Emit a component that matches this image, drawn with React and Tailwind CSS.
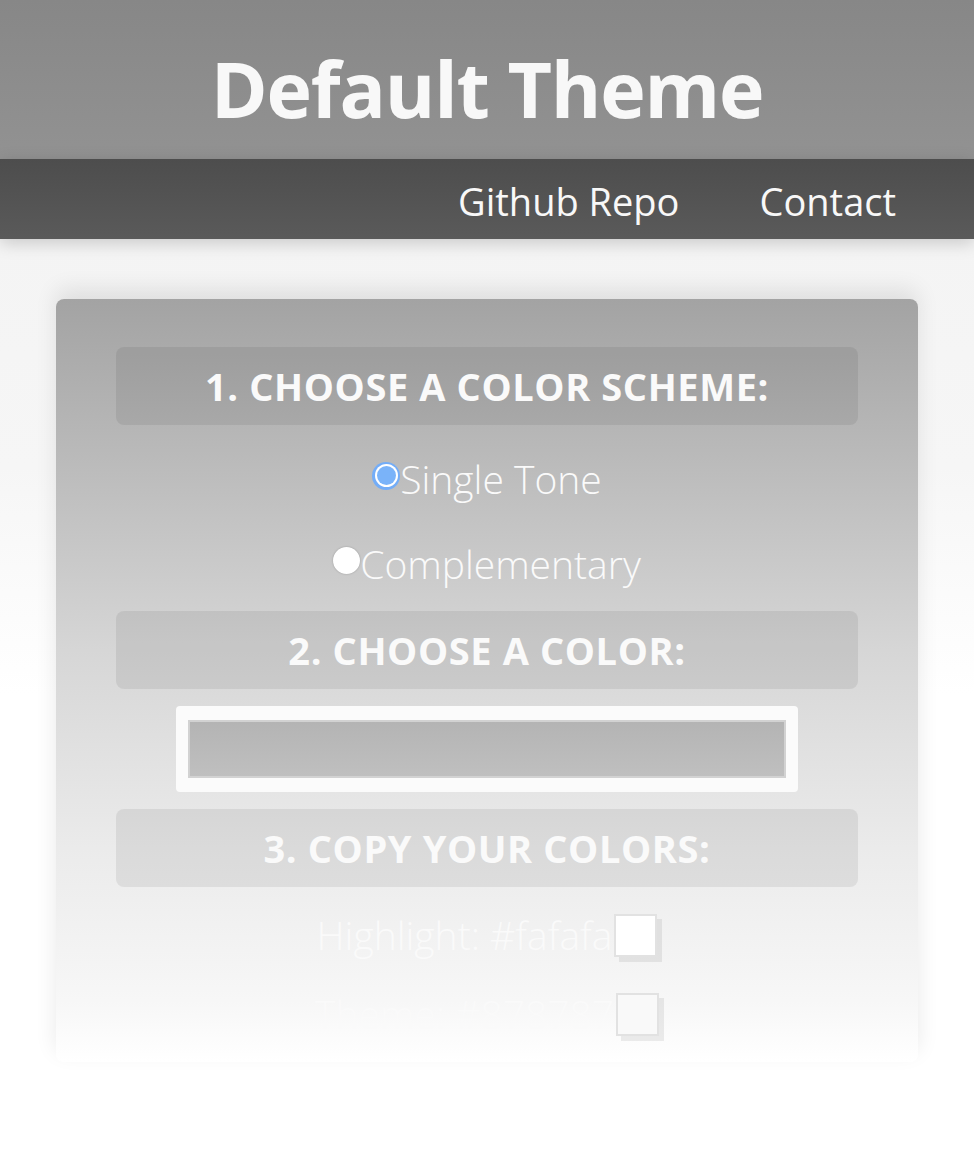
export default function App() {
  const font = { fontFamily: '"Open Sans", "Noto Sans", sans-serif' }

  return (
    <div className="min-h-[1149px] bg-white" style={font}>
      <header className="h-[159px] bg-gradient-to-b from-[#878787] to-[#929292] flex items-center justify-center">
        <h1 className="text-[77px] font-bold text-[#f8f8f8] tracking-[-1.2px] leading-none pt-[18px]">Default Theme</h1>
      </header>
      <nav className="relative z-10 h-[80px] bg-gradient-to-b from-[#4d4d4d] to-[#5a5a5a] flex items-center justify-end gap-[80px] pr-[78px] shadow-[0_4px_16px_rgba(0,0,0,0.18)]">
        <a className="text-[38px] text-[#f8f8f8] pt-1">Github Repo</a>
        <a className="text-[38px] text-[#f8f8f8] pt-1">Contact</a>
      </nav>

      <main className="bg-[linear-gradient(to_bottom,#f4f4f4_0%,#f6f6f6_25%,#ffffff_50%)] pt-[60px] px-[56px] pb-[87px]">
        <div className="rounded-lg bg-[linear-gradient(to_bottom,#a3a3a3_0%,#d6d6d6_46%,#ebebeb_72%,#f7f7f7_92%,#ffffff_100%)] shadow-[0_-10px_22px_rgba(0,0,0,0.09)] px-[60px] pt-[48px] pb-[9px]">
          <SectionTitle>1. CHOOSE A COLOR SCHEME:</SectionTitle>

          <div className="flex flex-col items-center mt-[12px]">
            <label className="h-[85px] flex items-center text-[39px] font-light text-[#fafafa]">
              <span className="w-[28px] h-[28px] rounded-full bg-[#74adf7] flex items-center justify-center mb-2">
                <span className="w-[23px] h-[23px] rounded-full bg-white flex items-center justify-center">
                  <span className="w-[19px] h-[19px] rounded-full bg-[#7ab3f9]" />
                </span>
              </span>
              <span>Single Tone</span>
            </label>
            <label className="h-[85px] flex items-center text-[39px] font-light text-[#fafafa]">
              <span className="w-[27px] h-[27px] rounded-full bg-white shadow-[0_0_2px_rgba(0,0,0,0.25)] mb-2" />
              <span>Complementary</span>
            </label>
          </div>

          <div className="mt-[4px]">
            <SectionTitle>2. CHOOSE A COLOR:</SectionTitle>
          </div>

          <div className="flex justify-center mt-[17px]">
            <div className="w-[622px] h-[86px] bg-[#fbfbfb] rounded-sm flex items-center justify-center">
              <div className="w-[598px] h-[58px] border-2 border-[#d2d2d2] bg-gradient-to-b from-[#b4b4b4] to-[#bfbfbf]" />
            </div>
          </div>

          <div className="mt-[17px]">
            <SectionTitle>3. COPY YOUR COLORS:</SectionTitle>
          </div>

          <div className="flex flex-col items-center mt-[8px] text-[39px] font-light text-[#fafafa]">
            <div className="h-[80px] flex items-center">
              <span>Highlight: #fafafa</span>
              <Swatch color="#ffffff" />
            </div>
            <div className="h-[78px] flex items-center">
              <span>Theme: #878787</span>
              <Swatch color="#f9f9f9" />
            </div>
          </div>
        </div>
      </main>
    </div>
  )
}

function SectionTitle({ children }) {
  return (
    <div className="h-[78px] rounded-lg bg-black/[0.07] flex items-center justify-center">
      <h2 className="text-[38px] font-bold text-[#fafafa] leading-none tracking-[0.6px]">{children}</h2>
    </div>
  )
}

function Swatch({ color }) {
  return (
    <span
      className="inline-block w-[43px] h-[43px] border-2 border-[#e2e2e2] shadow-[5px_5px_0_rgba(0,0,0,0.07)] ml-[2px]"
      style={{ backgroundColor: color }}
    />
  )
}
